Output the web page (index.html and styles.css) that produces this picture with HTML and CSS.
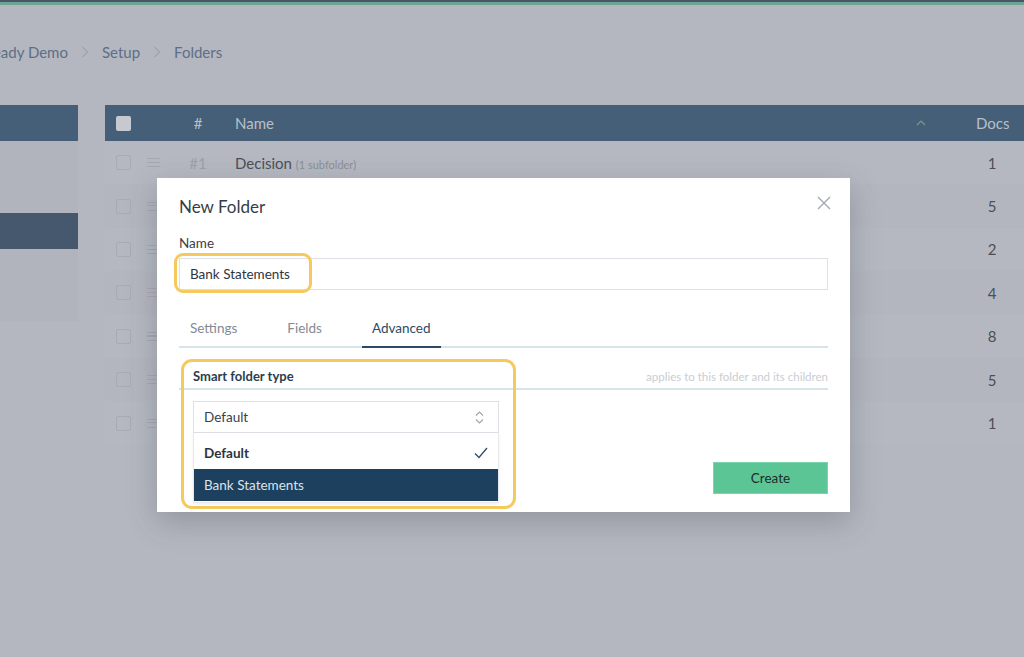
FILE: index.html
```html
<!DOCTYPE html>
<html>
<head>
<meta charset="utf-8">
<link rel="stylesheet" href="styles.css">
</head>
<body>
<div class="topbar"></div>
<div class="crumbs">
  <span class="crumb first">Ready Demo</span>
  <span class="sep"><svg width="8" height="12" viewBox="0 0 8 12"><path d="M1.5 1 L6.5 6 L1.5 11" fill="none" stroke="#9da2ac" stroke-width="1.2"/></svg></span>
  <span class="crumb">Setup</span>
  <span class="sep"><svg width="8" height="12" viewBox="0 0 8 12"><path d="M1.5 1 L6.5 6 L1.5 11" fill="none" stroke="#9da2ac" stroke-width="1.2"/></svg></span>
  <span class="crumb">Folders</span>
</div>
<div class="main">
  <div class="sidebar">
    <div class="side-head"></div>
    <div class="side-item"></div>
    <div class="side-item"></div>
    <div class="side-item active"></div>
    <div class="side-item"></div>
    <div class="side-item"></div>
  </div>
  <div class="table">
    <div class="thead">
      <div class="c-check"><span class="hbox"></span></div>
      <div class="c-drag"></div>
      <div class="c-num">#</div>
      <div class="c-name">Name</div>
      <div class="c-sort"><svg width="10" height="6" viewBox="0 0 10 6"><path d="M1 5 L5 1 L9 5" fill="none" stroke="#6f9c8a" stroke-width="1.2"/></svg></div>
      <div class="c-docs">Docs</div>
    </div>
    <div class="row"><div class="c-check"><span class="box"></span></div><div class="c-drag"><span class="burger"></span></div><div class="c-num">#1</div><div class="c-name">Decision <small>(1 subfolder)</small></div><div class="c-sort"></div><div class="c-docs">1</div></div>
    <div class="row alt"><div class="c-check"><span class="box"></span></div><div class="c-drag"><span class="burger"></span></div><div class="c-num">#2</div><div class="c-name">Contracts</div><div class="c-sort"></div><div class="c-docs">5</div></div>
    <div class="row"><div class="c-check"><span class="box"></span></div><div class="c-drag"><span class="burger"></span></div><div class="c-num">#3</div><div class="c-name">Invoices</div><div class="c-sort"></div><div class="c-docs">2</div></div>
    <div class="row alt"><div class="c-check"><span class="box"></span></div><div class="c-drag"><span class="burger"></span></div><div class="c-num">#4</div><div class="c-name">Reports</div><div class="c-sort"></div><div class="c-docs">4</div></div>
    <div class="row"><div class="c-check"><span class="box"></span></div><div class="c-drag"><span class="burger"></span></div><div class="c-num">#5</div><div class="c-name">Receipts</div><div class="c-sort"></div><div class="c-docs">8</div></div>
    <div class="row alt"><div class="c-check"><span class="box"></span></div><div class="c-drag"><span class="burger"></span></div><div class="c-num">#6</div><div class="c-name">Letters</div><div class="c-sort"></div><div class="c-docs">5</div></div>
    <div class="row"><div class="c-check"><span class="box"></span></div><div class="c-drag"><span class="burger"></span></div><div class="c-num">#7</div><div class="c-name">Other</div><div class="c-sort"></div><div class="c-docs">1</div></div>
  </div>
</div>

<div class="modal">
  <div class="close"><svg width="14" height="14" viewBox="0 0 14 14"><path d="M1 1 L13 13 M13 1 L1 13" stroke="#a3a8b4" stroke-width="1.4" fill="none"/></svg></div>
  <div class="m-title">New Folder</div>
  <div class="m-label">Name</div>
  <div class="name-field">
    <div class="input">Bank Statements</div>
    <div class="hl hl-name"></div>
  </div>
  <div class="tabs">
    <div class="tab">Settings</div>
    <div class="tab">Fields</div>
    <div class="tab active">Advanced</div>
  </div>
  <div class="smart-row">
    <div class="smart-label">Smart folder type</div>
    <div class="smart-hint">applies to this folder and its children</div>
  </div>
  <div class="select-wrap">
    <div class="select">
      <span>Default</span>
      <svg width="9" height="13" viewBox="0 0 9 13"><path d="M1 4.5 L4.5 1 L8 4.5 M1 8.5 L4.5 12 L8 8.5" fill="none" stroke="#9ea3ac" stroke-width="1.1"/></svg>
    </div>
    <div class="menu">
      <div class="opt opt-sel"><span>Default</span><svg width="14" height="12" viewBox="0 0 14 12"><path d="M1 6.5 L5 10.5 L13 1" fill="none" stroke="#2f4a64" stroke-width="1.3"/></svg></div>
      <div class="opt opt-hover">Bank Statements</div>
    </div>
  </div>
  <div class="hl hl-smart"></div>
  <div class="footer">
    <div class="btn">Create</div>
  </div>
</div>
</body>
</html>
```
FILE: styles.css
```css
* { box-sizing: border-box; }
html, body { margin: 0; padding: 0; }
body {
  width: 1024px;
  height: 657px;
  overflow: hidden;
  background: #b4b7bf;
  font-family: "Lato", "Open Sans", sans-serif;
  position: relative;
}
.topbar {
  height: 5px;
  border-top: 2px solid #47566b;
  background: #6ea592;
}
.crumbs {
  height: 100px;
  display: flex;
  align-items: center;
  padding-bottom: 6px;
  font-size: 15px;
  color: #5d6f86;
}
.crumb.first { margin-left: -16px; }
.sep { margin: 0 13px; display: flex; align-items: center; }
.main { display: flex; align-items: flex-start; }
.sidebar {
  width: 78px;
  margin-right: 27px;
  background: #b1b4bc;
}
.side-head { height: 36px; background: #465f78; }
.side-item { height: 36px; }
.side-item.active { background: #45586e; }
.table { flex: 1; }
.thead, .row { display: flex; align-items: center; }
.thead { height: 36px; background: #465f78; color: #b8c0ca; font-size: 15px; }
.row { height: 43.4px; background: #b5b8c0; color: #4a4f58; font-size: 15px; }
.row.alt { background: #b3b6be; }
.c-check { margin-left: 11px; width: 15px; height: 15px; display: flex; }
.hbox { width: 15px; height: 15px; border-radius: 2px; background: #c6c9d0; }
.box { width: 15px; height: 15px; border-radius: 2px; border: 1.5px solid #a8abb3; }
.c-drag { margin-left: 16px; width: 13px; }
.burger {
  display: block; width: 13px; height: 9px;
  border-top: 1.2px solid #a5a8b0; border-bottom: 1.2px solid #a5a8b0;
  position: relative;
}
.burger::after {
  content: ""; position: absolute; left: 0; right: 0; top: 2.7px; height: 1.2px; background: #a5a8b0;
}
.c-num { margin-left: 15px; width: 46px; text-align: center; }
.row .c-num { color: #9ca0a8; }
.c-name { margin-left: 14px; flex: 1; }
.c-name small { font-size: 11px; color: #8a8e96; }
.c-sort { width: 10px; display: flex; }
.c-docs { width: 32px; margin-left: 50px; margin-right: 16px; text-align: center; }
.thead .c-docs { text-align: right; }

.modal {
  position: absolute;
  left: 157px; top: 178px;
  width: 693px;
  background: #fff;
  padding: 18px 22px 18px 22px;
  box-shadow: 0 10px 28px rgba(60, 65, 80, 0.28);
  color: #333a44;
}
.close { position: absolute; top: 18px; right: 19px; width: 14px; height: 14px; display: flex; }
.m-title { font-size: 17px; line-height: 22px; color: #363d47; }
.m-label { margin-top: 16px; font-size: 13.5px; line-height: 18px; color: #3a3f48; }
.name-field { position: relative; margin-top: 6px; }
.input {
  height: 32px; border: 1px solid #dde0e5;
  font-size: 13.5px; line-height: 30px; padding-left: 10px; color: #2f3540;
}
.hl { position: absolute; border: 3px solid #f5c95c; border-radius: 9px; }
.hl-name { left: -5px; top: -5px; width: 138px; height: 40px; }
.hl-smart { left: 24px; top: 181px; width: 335px; height: 150px; border-radius: 11px; }
.tabs {
  margin-top: 20px;
  display: flex; gap: 30px;
  border-bottom: 2px solid #d7e4e9;
  padding-left: 1px;
}
.tab {
  height: 36px; line-height: 36px; padding: 0 10px;
  font-size: 13.5px; color: #838a95;
  margin-bottom: -2px; border-bottom: 2px solid transparent;
}
.tab.active { color: #2c4a66; border-bottom-color: #2c4a66; height: 38px; line-height: 36px; }
.smart-row {
  margin-top: 18px; height: 24px;
  display: flex; align-items: baseline; justify-content: space-between;
  border-bottom: 2px solid #d7e4e9;
  padding-left: 14px;
}
.smart-label { font-size: 13px; line-height: 20px; color: #2b3d50; font-weight: 700; }
.smart-hint { font-size: 11.5px; color: #c9cdd3; }
.select-wrap { position: relative; margin-top: 11px; margin-left: 14px; width: 306px; }
.select {
  height: 32px; border: 1px solid #dde0e5;
  display: flex; align-items: center; justify-content: space-between;
  padding: 0 14px 0 10px; font-size: 13.5px; color: #3a404a;
}
.menu {
  position: absolute; left: 0; top: 32px; width: 306px;
  background: #fff; border: 1px solid #e6e8ec; border-top: 0;
  padding-bottom: 1px;
  box-shadow: 0 2px 4px rgba(0,0,0,0.06);
  z-index: 2;
}
.opt { font-size: 13.5px; padding: 0 10px; display: flex; align-items: center; justify-content: space-between; }
.opt-sel { height: 36px; padding-top: 3px; font-weight: 700; color: #2b3440; }
.opt-hover { height: 32px; background: #1c405d; color: #dbe3ea; }
.footer { margin-top: 29px; display: flex; justify-content: flex-end; }
.btn {
  width: 115px; height: 32px; background: #5bc595;
  border: 1px solid #7ad4ad;
  display: flex; align-items: center; justify-content: center;
  font-size: 13.5px; color: #1f2b2a;
}
```
